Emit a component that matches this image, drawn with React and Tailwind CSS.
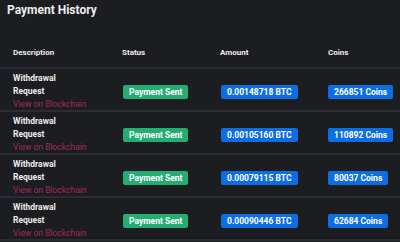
import React from 'react';

const payments = [
    { btc: '0.00148718', coins: '266851' },
    { btc: '0.00105160', coins: '110892' },
    { btc: '0.00079115', coins: '80037' },
    { btc: '0.00090446', coins: '62684' },
];

function Badge({ color, children }) {
    return (
        <span className={`inline-flex h-[14px] items-center justify-center rounded-[2px] px-[6px] text-[8.5px] font-bold leading-none text-white ${color}`}>
            {children}
        </span>
    );
}

export default function App() {
    return (
        <div className="h-[242px] w-[400px] overflow-hidden bg-[#1b1d21] font-['Roboto',sans-serif] text-[#ececec]">
            <h2 className="px-[7px] pt-[1px] text-[12px] font-bold leading-[18px]">Payment History</h2>
            <div className="mt-[25px] grid h-[25px] grid-cols-[109px_98px_108px_1fr] border-b-2 border-[#2b2d32] pl-[13px] pt-[3px] text-[8px] font-bold leading-[12px]">
                <div>Description</div>
                <div>Status</div>
                <div>Amount</div>
                <div>Coins</div>
            </div>
            {payments.map((p, i) => (
                <div key={i} className="grid h-[43px] grid-cols-[109px_98px_108px_1fr] items-center border-b-2 border-[#2b2d32] pl-[13px]">
                    <div className="pt-[3px] text-[8.5px] leading-[13px]">
                        <div className="font-bold">Withdrawal</div>
                        <div className="font-bold">Request</div>
                        <div className="text-[#a0295a]">View on Blockchain</div>
                    </div>
                    <div className="pl-[1px]">
                        <Badge color="bg-[#24ad73]">Payment Sent</Badge>
                    </div>
                    <div className="pl-[1px]">
                        <Badge color="bg-[#0d6de3]">{p.btc} BTC</Badge>
                    </div>
                    <div>
                        <Badge color="bg-[#0d6de3]">{p.coins} Coins</Badge>
                    </div>
                </div>
            ))}
        </div>
    );
}
